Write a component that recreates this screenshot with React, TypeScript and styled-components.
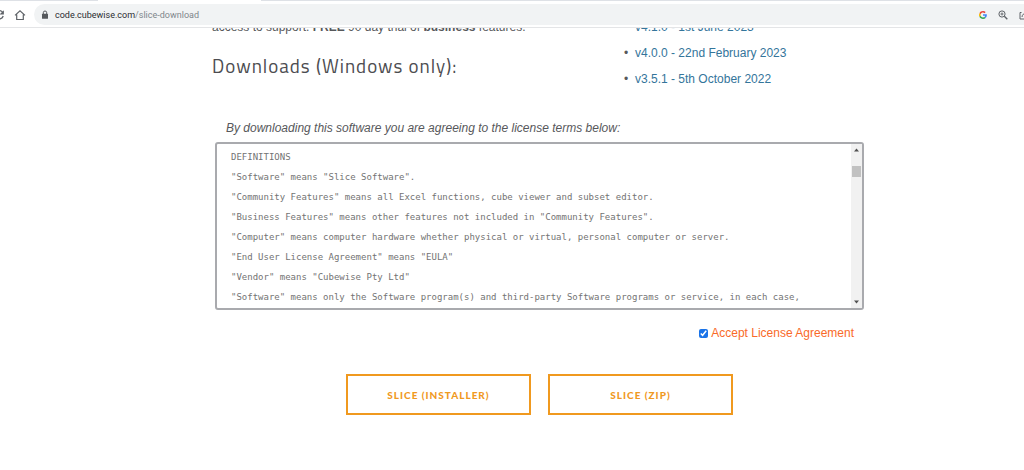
import React from "react";
import styled, { createGlobalStyle } from "styled-components";

const GlobalStyle = createGlobalStyle`
  *, *::before, *::after { box-sizing: border-box; }
  body {
    margin: 0;
    background: #fff;
    color: #57585b;
    font: 12px/26px "Liberation Sans", Arial, sans-serif;
    overflow: hidden;
  }
`;

const TabStrip = styled.div`
  display: flex;
  justify-content: space-between;
  height: 1px;
  background: #fff;
`;

const TabEdge = styled.span<{ $share: string }>`
  width: ${(p) => p.$share};
  background: #dee1e6;
`;

const Toolbar = styled.header`
  display: flex;
  align-items: center;
  height: 27px;
  padding-top: 1px;
  border-bottom: 1px solid #e4e5e7;
  background: #fff;
`;

const ToolButton = styled.button`
  display: flex;
  flex: none;
  padding: 0;
  border: 0;
  background: none;
  color: #5f6368;
`;

const NavButtons = styled.div`
  display: flex;
  flex: none;
  gap: 9px;
  width: 34px;
  margin-left: -7px;
  margin-right: 7px;
`;

const AddressBar = styled.div`
  display: flex;
  flex: 1;
  align-items: center;
  min-width: 0;
  height: 21px;
  padding-left: 7px;
  overflow: hidden;
  border-radius: 11px 0 0 11px;
  background: #f1f3f4;
  font: 9px/20px Roboto, sans-serif;
  color: #80868b;
`;

const Url = styled.span`
  flex: 1;
  margin-left: 6px;
  white-space: nowrap;
`;

const Host = styled.span`
  color: #2b2d30;
`;

const AddressActions = styled.div`
  display: flex;
  flex: none;
  align-items: center;
  gap: 11px;
  margin-right: -5px;
`;

const Main = styled.main`
  padding: 0 160px 0 212px;
  overflow: hidden;
`;

const Intro = styled.section`
  display: grid;
  grid-template-columns: 406px 1fr;
  margin-top: -14px;
  white-space: nowrap;
`;

const Paragraph = styled.p`
  margin: 0;
`;

const Heading = styled.h2`
  margin: 12px 0 0;
  font: 400 19px/28px "Titillium Web", "Open Sans", sans-serif;
  letter-spacing: 1px;
  color: #4c4c50;
`;

const Versions = styled.ul`
  margin: 0;
  padding: 0 0 0 17px;
  list-style: none;
`;

const Version = styled.li`
  &::before {
    content: "•";
    float: left;
    width: 11px;
    margin-left: -11px;
  }
`;

const VersionLink = styled.a`
  color: #34759b;
  text-decoration: none;
`;

const Notice = styled.p`
  margin: 23px 0 0 14px;
  font-style: italic;
`;

const License = styled.div`
  display: flex;
  height: 168px;
  margin: 1px 0 0 3px;
  border: 2px solid #a9aaae;
  border-radius: 3px;
  background: #fff;
`;

const LicenseText = styled.div`
  flex: 1;
  min-width: 0;
  padding: 3px 24px 0 14px;
  overflow: hidden;
  font: 9px/20px "DejaVu Sans Mono", monospace;
  color: #737373;
`;

const Clause = styled.p`
  margin: 0;
`;

const ScrollTrack = styled.div`
  display: flex;
  flex: none;
  flex-direction: column;
  align-items: center;
  width: 11px;
  padding: 4px 0;
  background: #f1f1f1;
`;

const ScrollThumb = styled.span`
  width: 9px;
  height: 11px;
  margin: 14px 0 auto;
  background: #c1c1c1;
`;

const Accept = styled.label`
  display: flex;
  justify-content: flex-end;
  align-items: center;
  gap: 3px;
  margin: 10px 10px 0 0;
  color: #f96a28;
`;

const Checkbox = styled.input`
  width: 9px;
  height: 9px;
  margin: 0;
  accent-color: #1a73e8;
`;

const Actions = styled.div`
  display: flex;
  justify-content: center;
  gap: 17px;
  margin: 28px 0 24px 3px;
`;

const DownloadButton = styled.button`
  width: 185px;
  height: 41px;
  padding: 0;
  border: 2px solid #f0991f;
  background: #fff;
  color: #f0991f;
  font: 900 10px/20px "Proxima Nova", Lato, sans-serif;
  letter-spacing: 1px;
`;

const ReloadIcon = () => (
  <svg width="12" height="12" viewBox="0 0 12 12" fill="none" stroke="currentColor" strokeWidth="1.3">
    <path d="M9.8 3.6A4.2 4.2 0 1 0 10.2 7" />
    <path d="M10.9 1.2v4.2H6.7z" fill="currentColor" stroke="none" />
  </svg>
);

const HomeIcon = () => (
  <svg width="12" height="12" viewBox="0 0 12 12" fill="none" stroke="currentColor" strokeWidth="1.2">
    <path d="M1 6.4 6 1.7l5 4.7M2.7 5.4v5.1h6.6V5.4" />
  </svg>
);

const LockIcon = () => (
  <svg width="8" height="10" viewBox="0 0 8 10">
    <path d="M2.3 4.2V2.7a1.7 1.7 0 0 1 3.4 0v1.5" fill="none" stroke="#55585c" strokeWidth="1" />
    <rect x="1" y="3.8" width="6" height="5" rx="0.6" fill="#55585c" />
  </svg>
);

const GoogleIcon = () => (
  <svg width="8" height="8" viewBox="0 0 48 48">
    <path fill="#ea4335" d="M24 9.5c3.5 0 6.7 1.2 9.2 3.6l6.9-6.9C35.9 2.4 30.5 0 24 0 14.6 0 6.5 5.4 2.6 13.2l8 6.2C12.4 13.7 17.7 9.5 24 9.5z" />
    <path fill="#4285f4" d="M47 24.6c0-1.6-.2-3.1-.4-4.6H24v9h12.9c-.6 3-2.2 5.5-4.7 7.2l7.7 6C44.4 38 47 32 47 24.6z" />
    <path fill="#fbbc05" d="M10.5 28.6a14.5 14.5 0 0 1 0-9.2l-8-6.2a24 24 0 0 0 0 21.6z" />
    <path fill="#34a853" d="M24 48c6.5 0 11.9-2.1 15.9-5.8l-7.7-6c-2.2 1.5-4.9 2.3-8.2 2.3-6.3 0-11.6-4.2-13.5-9.9l-8 6.2C6.5 42.6 14.6 48 24 48z" />
  </svg>
);

const ZoomIcon = () => (
  <svg width="10" height="10" viewBox="0 0 10 10" fill="none" stroke="currentColor">
    <circle cx="4" cy="4" r="3.1" strokeWidth="1" />
    <path d="M6.3 6.3 9.3 9.3" strokeWidth="1.4" />
    <path d="M4 2.5v3M2.5 4h3" strokeWidth="0.9" />
  </svg>
);

const ShareIcon = () => (
  <svg width="10" height="10" viewBox="0 0 10 10" fill="none" stroke="currentColor">
    <path d="M2.5 2.5H1V9h8V7M3 7c.3-2.5 1.5-3.5 4-3.5M5.5 1.5l2.5 2-2.5 2" />
  </svg>
);

const Arrow = ({ down }: { down?: boolean }) => (
  <svg width="5" height="4" viewBox="0 0 5 4">
    <path d={down ? "M0 .5h5L2.5 3.5z" : "M0 3.5h5L2.5 .5z"} fill="#505050" />
  </svg>
);

const versions = ["v4.1.0 - 1st June 2023", "v4.0.0 - 22nd February 2023", "v3.5.1 - 5th October 2022"];

const clauses = [
  "DEFINITIONS",
  '"Software" means "Slice Software".',
  '"Community Features" means all Excel functions, cube viewer and subset editor.',
  '"Business Features" means other features not included in "Community Features".',
  '"Computer" means computer hardware whether physical or virtual, personal computer or server.',
  '"End User License Agreement" means "EULA"',
  '"Vendor" means "Cubewise Pty Ltd"',
  '"Software" means only the Software program(s) and third-party Software programs or service, in each case,',
];

export default function App() {
  return (
    <>
      <GlobalStyle />
      <TabStrip>
        <TabEdge $share="9.6%" />
        <TabEdge $share="74.5%" />
      </TabStrip>
      <Toolbar>
        <NavButtons>
          <ToolButton aria-label="Reload"><ReloadIcon /></ToolButton>
          <ToolButton aria-label="Home"><HomeIcon /></ToolButton>
        </NavButtons>
        <AddressBar>
          <LockIcon />
          <Url><Host>code.cubewise.com</Host>/slice-download</Url>
          <AddressActions>
            <ToolButton aria-label="Search with Google"><GoogleIcon /></ToolButton>
            <ToolButton aria-label="Zoom"><ZoomIcon /></ToolButton>
            <ToolButton aria-label="Share"><ShareIcon /></ToolButton>
          </AddressActions>
        </AddressBar>
      </Toolbar>
      <Main>
        <Intro>
          <div>
            <Paragraph>
              access to support. <b>FREE</b> 90 day trial of <b>business</b> features.
            </Paragraph>
            <Heading>Downloads (Windows only):</Heading>
          </div>
          <Versions>
            {versions.map((v) => (
              <Version key={v}><VersionLink href="#">{v}</VersionLink></Version>
            ))}
          </Versions>
        </Intro>
        <Notice>By downloading this software you are agreeing to the license terms below:</Notice>
        <License>
          <LicenseText>
            {clauses.map((c) => <Clause key={c}>{c}</Clause>)}
          </LicenseText>
          <ScrollTrack>
            <Arrow />
            <ScrollThumb />
            <Arrow down />
          </ScrollTrack>
        </License>
        <Accept>
          <Checkbox type="checkbox" defaultChecked />
          Accept License Agreement
        </Accept>
        <Actions>
          <DownloadButton>SLICE (INSTALLER)</DownloadButton>
          <DownloadButton>SLICE (ZIP)</DownloadButton>
        </Actions>
      </Main>
    </>
  );
}
